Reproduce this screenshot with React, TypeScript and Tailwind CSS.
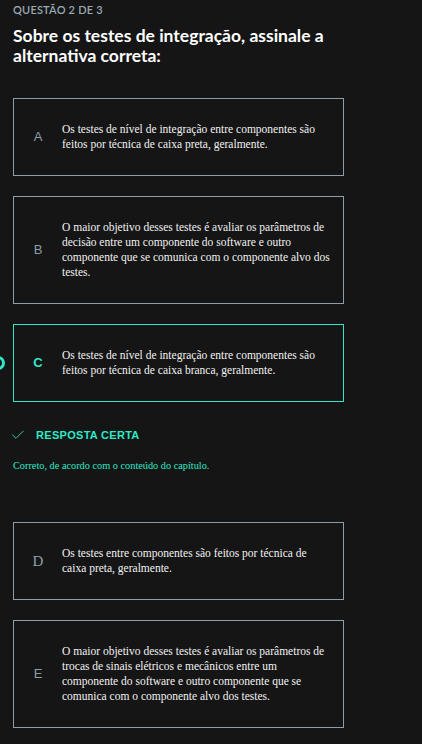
import { Check } from "lucide-react";

type Opt = { letter: string; text: string; serifLetter?: boolean };

const before: Opt[] = [
  { letter: "A", text: "Os testes de nível de integração entre componentes são feitos por técnica de caixa preta, geralmente." },
  {
    letter: "B",
    text: "O maior objetivo desses testes é avaliar os parâmetros de decisão entre um componente do software e outro componente que se comunica com o componente alvo dos testes.",
  },
];

const after: Opt[] = [
  { letter: "D", text: "Os testes entre componentes são feitos por técnica de caixa preta, geralmente.", serifLetter: true },
  {
    letter: "E",
    text: "O maior objetivo desses testes é avaliar os parâmetros de trocas de sinais elétricos e mecânicos entre um componente do software e outro componente que se comunica com o componente alvo dos testes.",
  },
];

function Option({ opt, selected }: { opt: Opt; selected?: boolean }) {
  return (
    <div
      className={`relative flex items-center w-[331px] border py-[23px] ${
        selected ? "border-[#2ee8c6]" : "border-[#8d9da7]"
      }`}
    >
      {selected && (
        <span className="absolute left-[-23px] top-1/2 -translate-y-1/2 w-[14px] h-[14px] rounded-full border-[3px] border-[#2ee8c6]" />
      )}
      <span
        className={`w-[48px] shrink-0 text-center ${
          selected ? "text-[#2ee8c6] font-bold text-[13px]" : "text-[#8d9da7] text-[13px]"
        } ${opt.serifLetter ? "text-[15px]" : ""}`}
        style={{
          fontFamily: opt.serifLetter ? '"Liberation Serif", serif' : '"Liberation Sans", Arial, sans-serif',
        }}
      >
        {opt.letter}
      </span>
      <p className="w-[268px] text-[11.5px] leading-[15px] text-[#f2f2f2] font-['Liberation_Serif',serif]">{opt.text}</p>
    </div>
  );
}

export default function App() {
  return (
    <div className="min-h-[744px] bg-[#151515] pl-[13px] pt-[3px] pb-[20px] overflow-hidden">
      <div className="text-[11px] font-semibold tracking-[0.2px] text-[#9aa9b1] font-['Lato',sans-serif] leading-[14px]">
        QUESTÃO 2 DE 3
      </div>
      <h1 className="mt-[9px] text-[17.5px] font-bold leading-[20px] text-white font-['Lato',sans-serif] w-[340px]">
        Sobre os testes de integração, assinale a alternativa correta:
      </h1>

      <div className="mt-[32px] flex flex-col gap-[20px]">
        {before.map((o) => (
          <Option key={o.letter} opt={o} />
        ))}
        <Option
          selected
          opt={{ letter: "C", text: "Os testes de nível de integração entre componentes são feitos por técnica de caixa branca, geralmente." }}
        />
      </div>

      <div className="mt-[25px] flex items-center gap-[10px] -ml-[3px]">
        <Check size={16} strokeWidth={1.3} className="text-[#2ee8c6]" />
        <span className="text-[11px] font-bold text-[#2ee8c6] font-['Liberation_Sans',Arial,sans-serif] tracking-[0.3px]">
          RESPOSTA CERTA
        </span>
      </div>
      <p className="mt-[14px] text-[10.3px] text-[#2ee8c6] font-['Liberation_Serif',serif]">
        Correto, de acordo com o conteúdo do capítulo.
      </p>

      <div className="mt-[49px] flex flex-col gap-[20px]">
        {after.map((o) => (
          <Option key={o.letter} opt={o} />
        ))}
      </div>
    </div>
  );
}
